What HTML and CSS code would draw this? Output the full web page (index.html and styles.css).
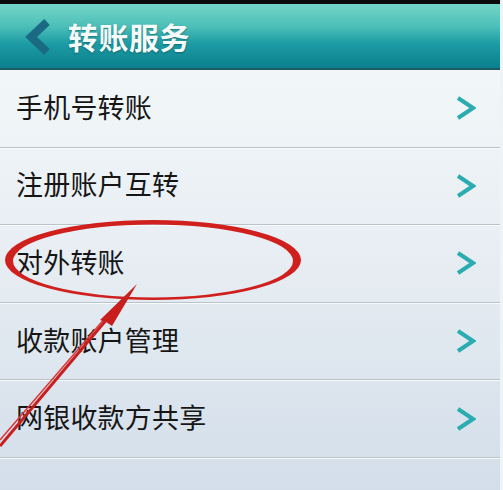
FILE: index.html
```html
<!DOCTYPE html>
<html lang="zh-CN">
<head>
<meta charset="utf-8">
<title>转账服务</title>
<link rel="stylesheet" href="styles.css">
</head>
<body>
<div class="screen">
  <div class="topstrip"></div>
  <header class="header">
    <svg class="back" width="28" height="36" viewBox="0 0 28 36"><path d="M24 3 L8 18 L24 33" fill="none" stroke="#1b6a84" stroke-width="8" stroke-linejoin="miter"/></svg>
    <h1 class="title">转账服务</h1>
  </header>
  <ul class="list">
    <li class="row"><span class="label">手机号转账</span><svg class="chev" width="20" height="26" viewBox="0 0 20 26"><path d="M2 3 L17 13 L2 23" fill="none" stroke="#2aacb0" stroke-width="4"/></svg></li>
    <li class="row"><span class="label">注册账户互转</span><svg class="chev" width="20" height="26" viewBox="0 0 20 26"><path d="M2 3 L17 13 L2 23" fill="none" stroke="#2aacb0" stroke-width="4"/></svg></li>
    <li class="row"><span class="label">对外转账</span><svg class="chev" width="20" height="26" viewBox="0 0 20 26"><path d="M2 3 L17 13 L2 23" fill="none" stroke="#2aacb0" stroke-width="4"/></svg></li>
    <li class="row"><span class="label">收款账户管理</span><svg class="chev" width="20" height="26" viewBox="0 0 20 26"><path d="M2 3 L17 13 L2 23" fill="none" stroke="#2aacb0" stroke-width="4"/></svg></li>
    <li class="row"><span class="label">网银收款方共享</span><svg class="chev" width="20" height="26" viewBox="0 0 20 26"><path d="M2 3 L17 13 L2 23" fill="none" stroke="#2aacb0" stroke-width="4"/></svg></li>
  </ul>
  <svg class="annot" width="503" height="490" viewBox="0 0 503 490">
    <path fill="#d0201e" fill-rule="evenodd" d="M5 260 A148 40 0 1 0 301 260 A148 40 0 1 0 5 260 Z M13 261 A140 36.5 0 1 0 293 261 A140 36.5 0 1 0 13 261 Z"/>
    <path d="M0 446 L118 306" stroke="#c81e1e" stroke-width="3" fill="none"/>
    <path d="M0 440 L112 310" stroke="#d83a3a" stroke-width="1.5" fill="none"/>
    <path d="M137 284 L100 320 L106 322 L112 326 Z" fill="#c81e1e"/>
  </svg>
</div>
</body>
</html>
```
FILE: styles.css
```css
* { box-sizing: border-box; }
html, body { margin: 0; padding: 0; }
body {
  width: 503px;
  height: 490px;
  overflow: hidden;
  background: #eef3f6;
  font-family: "Noto Sans CJK SC", "Noto Sans", sans-serif;
}
.screen {
  position: relative;
  width: 500px;
  height: 490px;
  display: flex;
  flex-direction: column;
  background: linear-gradient(to bottom, #f6fafb 0%, #e8eef3 50%, #d3deea 100%);
}
.topstrip {
  height: 4px;
  background: #0c0a0a;
}
.header {
  height: 66px;
  display: flex;
  align-items: center;
  padding-left: 23px;
  background: linear-gradient(to bottom, #74d4c6 0%, #4cbfb8 35%, #1d9ca4 62%, #0b7f8e 100%);
  border-bottom: 2px solid #1d5d62;
}
.back { display: block; margin-top: 2px; }
.title {
  margin: 0 0 0 17px;
  font-size: 30px;
  font-weight: 700;
  color: #f4fbfa;
  letter-spacing: 0.5px;
  text-shadow: 0 1px 2px rgba(0, 60, 70, 0.5);
  line-height: 1;
}
.list {
  list-style: none;
  margin: 0;
  padding: 0;
}
.row {
  height: 77.6px;
  display: flex;
  align-items: center;
  justify-content: space-between;
  padding: 0 24px 4px 16px;
  border-bottom: 1px solid #b9c3ca;
  box-shadow: 0 1px 0 #f8fbfc;
}
.label {
  font-size: 27px;
  color: #161616;
  letter-spacing: 0.2px;
  line-height: 1;
}
.chev { display: block; margin-top: 4px; }
.annot {
  position: absolute;
  left: 0;
  top: 0;
  pointer-events: none;
}
```
